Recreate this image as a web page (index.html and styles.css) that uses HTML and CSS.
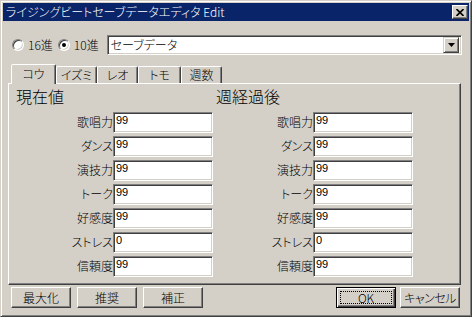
FILE: index.html
```html
<!DOCTYPE html>
<html lang="ja">
<head>
    <meta charset="UTF-8">
    <title>ライジングビートセーブデータエディタ Edit</title>
    <link rel="stylesheet" href="styles.css">
</head>
<body>
    <div class="window">
        <div class="titlebar">
            <span class="title">ライジングビートセーブデータエディタ Edit</span>
            <div class="close">
                <svg width="8" height="7" viewBox="0 0 8 7"><path d="M0.5 0L7.5 7M7.5 0L0.5 7" stroke="#000" stroke-width="1.6"/></svg>
            </div>
        </div>
        <div class="content">
            <div class="mode-row">
                <label class="radio"><span class="dot"></span>16進</label>
                <label class="radio"><span class="dot checked"></span>10進</label>
                <div class="combo">
                    <span class="combo-text">セーブデータ</span>
                    <span class="combo-btn">
                        <svg width="7" height="4" viewBox="0 0 7 4"><polygon points="0,0 7,0 3.5,4" fill="#000"/></svg>
                    </span>
                </div>
            </div>
            <div class="tabs">
                <div class="tab active">コウ</div>
                <div class="tab">イズミ</div>
                <div class="tab">レオ</div>
                <div class="tab wide">トモ</div>
                <div class="tab">週数</div>
            </div>
            <div class="panel">
                <div class="column">
                    <h2>現在値</h2>
                    <div class="fields">
                        <span class="label">歌唱力</span><div class="field">99</div>
                        <span class="label">ダンス</span><div class="field">99</div>
                        <span class="label">演技力</span><div class="field">99</div>
                        <span class="label">トーク</span><div class="field">99</div>
                        <span class="label">好感度</span><div class="field">99</div>
                        <span class="label">ストレス</span><div class="field">0</div>
                        <span class="label">信頼度</span><div class="field">99</div>
                    </div>
                </div>
                <div class="column">
                    <h2>週経過後</h2>
                    <div class="fields">
                        <span class="label">歌唱力</span><div class="field">99</div>
                        <span class="label">ダンス</span><div class="field">99</div>
                        <span class="label">演技力</span><div class="field">99</div>
                        <span class="label">トーク</span><div class="field">99</div>
                        <span class="label">好感度</span><div class="field">99</div>
                        <span class="label">ストレス</span><div class="field">0</div>
                        <span class="label">信頼度</span><div class="field">99</div>
                    </div>
                </div>
            </div>
            <div class="footer">
                <div class="btn-group">
                    <div class="btn">最大化</div>
                    <div class="btn">推奨</div>
                    <div class="btn">補正</div>
                </div>
                <div class="btn-group right">
                    <div class="btn default"><span class="focus">OK</span></div>
                    <div class="btn narrow">キャンセル</div>
                </div>
            </div>
        </div>
    </div>
</body>
</html>
```

FILE: styles.css
```css
body {
    margin: 0;
    background: #d4d0c8;
}
.window {
    width: 472px;
    height: 317px;
    box-sizing: border-box;
    background: #d4d0c8;
    border: 1px solid;
    border-color: #d4d0c8 #404040 #404040 #d4d0c8;
    box-shadow: inset 1px 1px 0 #fff, inset -1px -1px 0 #808080;
    padding: 2px;
    display: flex;
    flex-direction: column;
    font-family: "Noto Sans CJK JP", sans-serif;
    font-size: 12px;
    font-weight: 300;
    font-feature-settings: "palt";
    color: #000;
}
.titlebar {
    height: 18px;
    flex-shrink: 0;
    background: #0a246a;
    color: #fff;
    display: flex;
    align-items: center;
    justify-content: space-between;
    padding: 0 1px 0 3px;
}
.title {
    font-size: 12px;
    line-height: 18px;
}
.close {
    width: 16px;
    height: 14px;
    box-sizing: border-box;
    background: #d4d0c8;
    border: 1px solid;
    border-color: #fff #404040 #404040 #fff;
    box-shadow: inset -1px -1px 0 #808080;
    display: flex;
    align-items: center;
    justify-content: center;
}
.content {
    flex: 1;
    display: flex;
    flex-direction: column;
    padding: 0 8px 0 5px;
}
.mode-row {
    display: flex;
    align-items: center;
    height: 20px;
    margin-top: 14px;
}
.radio {
    display: flex;
    align-items: center;
    line-height: 20px;
    margin-left: 4px;
}
.radio + .radio {
    margin-left: 5px;
}
.dot {
    width: 12px;
    height: 12px;
    box-sizing: border-box;
    border-radius: 50%;
    background: #fff;
    border: 1px solid;
    border-color: #808080 #fff #fff #808080;
    box-shadow: inset 1px 1px 0 #404040, inset -1px -1px 0 #d4d0c8;
    margin-right: 4px;
    position: relative;
}
.dot.checked::after {
    content: "";
    position: absolute;
    left: 3px;
    top: 3px;
    width: 4px;
    height: 4px;
    border-radius: 50%;
    background: #000;
}
.combo {
    flex: 1;
    height: 20px;
    box-sizing: border-box;
    margin-left: 8px;
    margin-right: -1px;
    background: #fff;
    border: 1px solid;
    border-color: #808080 #fff #fff #808080;
    box-shadow: inset 1px 1px 0 #404040, inset -1px -1px 0 #d4d0c8;
    display: flex;
    align-items: center;
    justify-content: space-between;
    padding: 1px 2px 1px 3px;
}
.combo-text {
    line-height: 16px;
}
.combo-btn {
    width: 16px;
    height: 16px;
    box-sizing: border-box;
    background: #d4d0c8;
    border: 1px solid;
    border-color: #d4d0c8 #404040 #404040 #d4d0c8;
    box-shadow: inset 1px 1px 0 #fff, inset -1px -1px 0 #808080;
    display: flex;
    align-items: center;
    justify-content: center;
}
.tabs {
    display: flex;
    align-items: flex-end;
    height: 19px;
    margin-top: 9px;
    padding-left: 3px;
    position: relative;
    z-index: 1;
}
.tab {
    width: 41px;
    height: 17px;
    box-sizing: border-box;
    border: 1px solid;
    border-bottom: none;
    border-color: #fff #404040 transparent #fff;
    border-radius: 2px 2px 0 0;
    box-shadow: inset -1px 0 0 #808080;
    text-align: center;
    line-height: 16px;
}
.tab.active {
    width: 45px;
    height: 20px;
    margin-bottom: -1px;
    background: #d4d0c8;
    line-height: 17px;
    padding-bottom: 2px;
}
.tab.wide {
    width: 43px;
}
.panel {
    height: 202px;
    box-sizing: border-box;
    border: 1px solid;
    border-color: #fff #404040 #404040 #fff;
    box-shadow: inset -1px -1px 0 #808080;
    padding: 3px 7px 0 7px;
    display: grid;
    grid-template-columns: 197px 197px;
    column-gap: 3px;
    align-content: start;
}
.column h2 {
    margin: 0;
    font-size: 16px;
    font-weight: 300;
    line-height: 18px;
}
.fields {
    display: grid;
    grid-template-columns: 1fr 100px;
    row-gap: 3px;
    margin-top: 7px;
}
.label {
    text-align: right;
    line-height: 19px;
    height: 21px;
}
.field {
    height: 21px;
    box-sizing: border-box;
    background: #fff;
    border: 1px solid;
    border-color: #808080 #fff #fff #808080;
    box-shadow: inset 1px 1px 0 #404040, inset -1px -1px 0 #d4d0c8;
    padding: 2px 0 0 2px;
    font-family: "Liberation Sans", Arial, sans-serif;
    font-size: 11px;
    line-height: 11px;
}
.footer {
    display: flex;
    justify-content: space-between;
    margin-top: 2px;
    padding: 0 1px 0 3px;
}
.btn-group {
    display: flex;
    gap: 6px;
}
.btn-group.right {
    gap: 4px;
}
.btn {
    width: 60px;
    height: 21px;
    box-sizing: border-box;
    border: 1px solid;
    border-color: #fff #404040 #404040 #fff;
    box-shadow: inset -1px -1px 0 #808080;
    display: flex;
    align-items: center;
    justify-content: center;
    line-height: 16px;
}
.btn.narrow {
    letter-spacing: -0.5px;
}
.btn.default {
    border: 1px solid #000;
    box-shadow: inset 1px 1px 0 #fff, inset -1px -1px 0 #404040, inset -2px -2px 0 #808080;
    padding: 3px;
}
.focus {
    flex: 1;
    align-self: stretch;
    border: 1px dotted #000;
    text-align: center;
    line-height: 11px;
}
```
